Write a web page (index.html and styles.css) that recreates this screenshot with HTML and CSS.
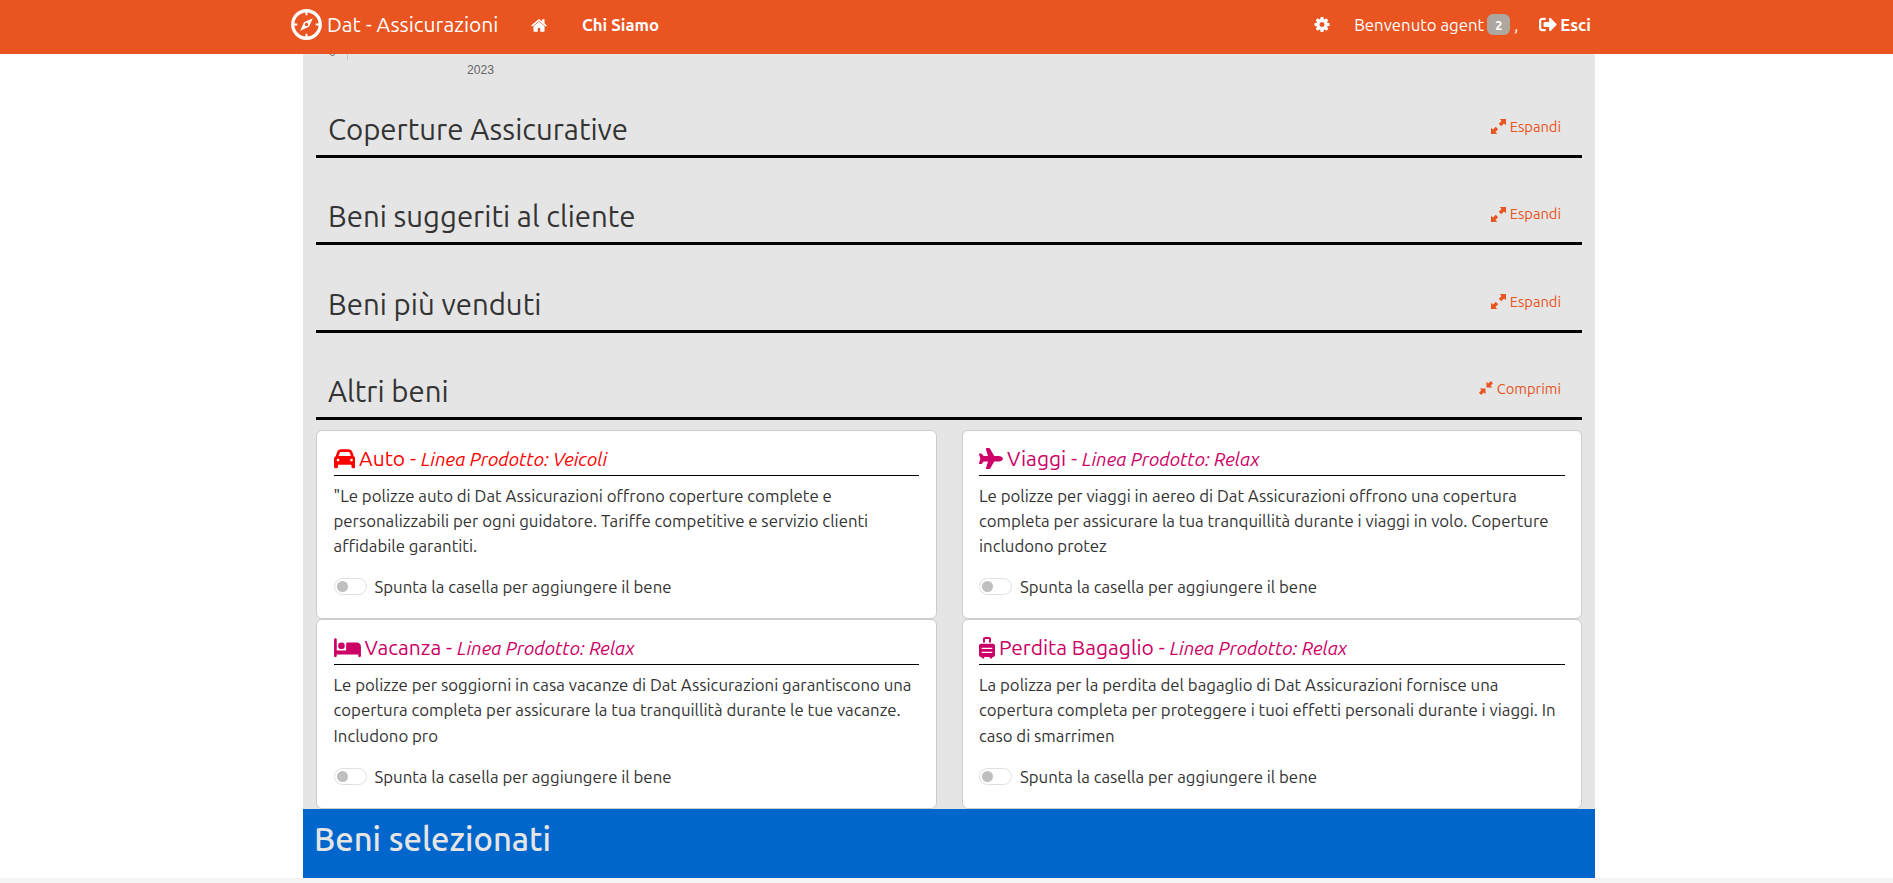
FILE: index.html
```html
<!DOCTYPE html>
<html lang="it">
<head>
<meta charset="utf-8">
<title>Dat - Assicurazioni</title>
<link rel="stylesheet" href="styles.css">
</head>
<body>
<svg class="defs" width="0" height="0" aria-hidden="true">
  <symbol id="expand" viewBox="0 0 15 15"><path d="M15 0V6.200L13 4.400 10.200 7.200 7.800 4.800 10.600 2 8.800 0zM0 15V8.800L2 10.600 4.800 7.800 7.200 10.200 4.400 13 6.200 15z"/></symbol>
  <symbol id="compress" viewBox="0 0 15 15"><path d="M8 7V.8L10 2.600 12.600 0 15 2.400 12.400 5 14.200 7zM7 8V14.200L5 12.400 2.400 15 0 12.600 2.600 10 .8 8z"/></symbol>
</svg>
<nav class="navbar">
  <a class="brand">
    <svg class="brand-logo" viewBox="0 0 32 32"><circle cx="16" cy="16" r="14.200" fill="none" stroke="#fff" stroke-width="3.400"/><path d="M16 2v4.500M16 25.500v4.500M2 16h4.500M25.500 16h4.500" stroke="#fff" stroke-width="2"/><path fill="#fff" fill-rule="evenodd" d="M22.500 9.500L18.600 18.200 9.500 22.500 13.400 13.800zM16 14.200a1.800 1.800 0 1 0 0 3.600 1.800 1.800 0 1 0 0-3.600z"/></svg>
    <span class="brand-name">Dat - Assicurazioni</span>
  </a>
  <a class="nav-home"><svg class="nav-icon" viewBox="64 128 1664 1536"><path d="M1472 992v480q0 26-19 45t-45 19h-384v-384h-256v384h-384q-26 0-45-19t-19-45v-480q0-1 .5-3t.5-3l575-474 575 474q1 2 1 6zm223-69l-62 74q-8 9-21 11h-3q-13 0-21-7l-692-577-692 577q-12 8-24 7-13-2-21-11l-62-74q-8-10-7-23.500t11-21.500l719-599q32-26 76-26t76 26l244 204v-195q0-14 9-23t23-9h192q14 0 23 9t9 23v408l219 182q10 8 11 21.500t-7 23.500z"/></svg></a>
  <a class="nav-link nav-about">Chi Siamo</a>
  <div class="nav-user">
    <svg class="nav-icon" viewBox="128 128 1536 1536"><path d="M1152 896q0-106-75-181t-181-75-181 75-75 181 75 181 181 75 181-75 75-181zm512-109v222q0 12-8 23t-20 13l-185 28q-19 54-39 91 35 50 107 138 10 12 10 25t-9 23q-27 37-99 108t-94 71q-12 0-26-9l-138-108q-44 23-91 38-16 136-29 186-7 28-36 28h-222q-14 0-24.500-8.500t-11.500-21.500l-28-184q-49-16-90-37l-141 107q-10 9-25 9-14 0-25-11-126-114-165-168-7-10-7-23 0-12 8-23 15-21 51-66.500t54-70.500q-27-50-41-99l-183-27q-13-2-21-12.500t-8-23.500v-222q0-12 8-23t19-13l186-28q14-46 39-92-40-57-107-138-10-12-10-24 0-10 9-23 26-36 98.500-107.500t94.500-71.500q13 0 26 10l138 107q44-23 91-38 16-136 29-186 7-28 36-28h222q14 0 24.500 8.500t11.500 21.500l28 184q49 16 90 37l142-107q9-9 24-9 13 0 25 10 129 119 165 170 7 8 7 22 0 12-8 23-15 21-51 66.500t-54 70.500q26 50 41 98l183 28q13 2 21 12.500t8 23.500z"/></svg>
    <span class="welcome">Benvenuto agent</span>
    <span class="badge">2</span>
    <span class="comma">,</span>
    <svg class="exit-icon" viewBox="0 48 512 416"><path d="M497 273L329 441c-15 15-41 4.500-41-17v-96H152c-13.300 0-24-10.700-24-24v-96c0-13.300 10.700-24 24-24h136V88c0-21.400 25.900-32 41-17l168 168c9.300 9.400 9.300 24.600 0 34zM192 436v-40c0-6.600-5.400-12-12-12H96c-17.700 0-32-14.300-32-32V160c0-17.700 14.300-32 32-32h84c6.600 0 12-5.400 12-12V76c0-6.600-5.400-12-12-12H96c-53 0-96 43-96 96v192c0 53 43 96 96 96h84c6.600 0 12-5.400 12-12z"/></svg>
    <a class="nav-link">Esci</a>
  </div>
</nav>
<main class="page">
  <svg class="chart" width="320" height="40" viewBox="0 0 320 40"><path d="M44.500 0V6" stroke="#c8c8c8"/><text x="29.500" y="2">0</text><text x="177.500" y="20">2023</text></svg>
  <div class="sections">
    <section class="section"><h2 class="section-title">Coperture Assicurative</h2><a class="toggle-link"><svg><use href="#expand"/></svg>Espandi</a></section>
    <section class="section"><h2 class="section-title">Beni suggeriti al cliente</h2><a class="toggle-link"><svg><use href="#expand"/></svg>Espandi</a></section>
    <section class="section"><h2 class="section-title">Beni più venduti</h2><a class="toggle-link"><svg><use href="#expand"/></svg>Espandi</a></section>
    <section class="section"><h2 class="section-title">Altri beni</h2><a class="toggle-link compress"><svg><use href="#compress"/></svg>Comprimi</a></section>
  </div>
  <div class="cards">
    <article class="card">
      <h3 class="card-title vehicles"><svg class="i-car" viewBox="0 0 512 512"><path d="M135.200 117.400L109.100 192H402.900l-26.100-74.600C372.300 104.600 360.200 96 346.600 96H165.400c-13.600 0-25.700 8.600-30.200 21.400zM39.600 196.800L74.800 96.300C88.300 57.800 124.600 32 165.400 32H346.600c40.800 0 77.100 25.800 90.600 64.300l35.200 100.500c23.200 9.600 39.600 32.500 39.600 59.200V448c0 17.700-14.300 32-32 32H448c-17.700 0-32-14.300-32-32V400H96v48c0 17.700-14.300 32-32 32H32c-17.700 0-32-14.300-32-32V256c0-26.700 16.400-49.600 39.600-59.200zM128 288a32 32 0 1 0-64 0 32 32 0 1 0 64 0zm288 32a32 32 0 1 0 0-64 32 32 0 1 0 0 64z"/></svg><span>Auto -</span><em>Linea Prodotto: Veicoli</em></h3>
      <p class="desc">"Le polizze auto di Dat Assicurazioni offrono coperture complete e<br>personalizzabili per ogni guidatore. Tariffe competitive e servizio clienti<br>affidabile garantiti.</p>
      <label class="check"><span class="switch"></span>Spunta la casella per aggiungere il bene</label>
    </article>
    <article class="card">
      <h3 class="card-title relax"><svg class="i-plane" viewBox="0 0 576 512"><path d="M480 192H365.710L260.610 8.060A16.014 16.014 0 0 0 246.710 0h-65.500c-10.630 0-18.300 10.170-15.380 20.390L214.860 192H112l-43.200-57.600c-3.020-4.030-7.770-6.400-12.800-6.400H16.010C5.600 128-2.040 137.780.490 147.880L32 256 .490 364.120C-2.040 374.220 5.600 384 16.010 384H56c5.040 0 9.780-2.370 12.800-6.400L112 320h102.860l-49.030 171.600c-2.920 10.220 4.750 20.400 15.380 20.400h65.500c5.740 0 11.040-3.080 13.890-8.060L365.710 320H480c35.350 0 96-28.650 96-64s-60.650-64-96-64z"/></svg><span>Viaggi -</span><em>Linea Prodotto: Relax</em></h3>
      <p class="desc">Le polizze per viaggi in aereo di Dat Assicurazioni offrono una copertura<br>completa per assicurare la tua tranquillità durante i viaggi in volo. Coperture<br>includono protez</p>
      <label class="check"><span class="switch"></span>Spunta la casella per aggiungere il bene</label>
    </article>
    <article class="card">
      <h3 class="card-title relax"><svg class="i-bed" viewBox="0 0 640 512"><path d="M32 32c17.700 0 32 14.300 32 32V320H288V160c0-17.700 14.300-32 32-32H544c53 0 96 43 96 96V448c0 17.700-14.300 32-32 32s-32-14.300-32-32V416H64v32c0 17.700-14.300 32-32 32s-32-14.300-32-32V64C0 46.300 14.300 32 32 32zm144 96a80 80 0 1 1 0 160 80 80 0 1 1 0-160z"/></svg><span>Vacanza -</span><em>Linea Prodotto: Relax</em></h3>
      <p class="desc">Le polizze per soggiorni in casa vacanze di Dat Assicurazioni garantiscono una<br>copertura completa per assicurare la tua tranquillità durante le tue vacanze.<br>Includono pro</p>
      <label class="check"><span class="switch"></span>Spunta la casella per aggiungere il bene</label>
    </article>
    <article class="card">
      <h3 class="card-title relax"><svg class="i-bag" viewBox="0 0 384 512"><path d="M336 160H48c-26.500 0-48 21.500-48 48v224c0 26.500 21.500 48 48 48h16v16c0 8.800 7.200 16 16 16h32c8.800 0 16-7.200 16-16v-16h128v16c0 8.800 7.200 16 16 16h32c8.800 0 16-7.200 16-16v-16h16c26.500 0 48-21.500 48-48V208c0-26.500-21.500-48-48-48zm-16 216c0 4.400-3.600 8-8 8H72c-4.400 0-8-3.600-8-8v-16c0-4.400 3.600-8 8-8h240c4.400 0 8 3.600 8 8v16zm0-96c0 4.400-3.600 8-8 8H72c-4.400 0-8-3.600-8-8v-16c0-4.400 3.600-8 8-8h240c4.400 0 8 3.600 8 8v16zM144 48h96v80h48V48c0-26.500-21.500-48-48-48h-96c-26.500 0-48 21.500-48 48v80h48V48z"/></svg><span>Perdita Bagaglio -</span><em>Linea Prodotto: Relax</em></h3>
      <p class="desc">La polizza per la perdita del bagaglio di Dat Assicurazioni fornisce una<br>copertura completa per proteggere i tuoi effetti personali durante i viaggi. In<br>caso di smarrimen</p>
      <label class="check"><span class="switch"></span>Spunta la casella per aggiungere il bene</label>
    </article>
  </div>
  <footer class="selected"><h2 class="selected-title">Beni selezionati</h2></footer>
</main>
</body>
</html>
```
FILE: styles.css
```css
* { box-sizing: border-box; }
body {
  margin: 0;
  height: 883px;
  overflow: hidden;
  display: flex;
  flex-direction: column;
  background: linear-gradient(#fff 878px, #f5f5f5 878px);
  color: #333;
  font: 16.8px/25.2px Ubuntu, "Open Sans", sans-serif;
  white-space: nowrap;
}
h2, h3, p { margin: 0; font-weight: 400; }
svg { display: block; flex: none; }
.defs { position: absolute; }

.navbar {
  flex: none;
  height: 54px;
  padding: 0 302px 4px 291px;
  display: flex;
  align-items: center;
  background: #e95420;
  color: #fff;
  fill: #fff;
}
.brand { display: flex; align-items: center; }
.brand-logo { width: 31px; height: 31px; margin-bottom: 1px; }
.brand-name { width: 171px; margin-left: 5px; font-size: 21px; }
.nav-home { margin-left: 33px; }
.nav-icon { width: 16px; height: 15px; }
.nav-link { font-weight: 700; }
.nav-about { margin-left: 35px; }
.nav-user { margin-left: auto; display: flex; align-items: center; }
.welcome { width: 129px; margin-left: 24px; }
.badge {
  width: 23px;
  height: 21px;
  margin-left: 4px;
  border-radius: 6px;
  background: #aea79f;
  font-size: 12.6px;
  font-weight: 700;
  line-height: 23px;
  text-align: center;
}
.comma { width: 28.5px; padding-left: 4px; }
.exit-icon { width: 18px; height: 15px; margin-right: 3.5px; }

.page {
  width: 1292px;
  height: 824px;
  margin-left: 303px;
  display: flex;
  flex-direction: column;
  background: #e5e5e5;
}
.chart {
  fill: #666;
  text-anchor: middle;
  font: 12.2px "Liberation Sans", Arial, sans-serif;
}
.sections { display: flex; flex-direction: column; gap: 23.33px; padding: 0 13px; }
.section {
  height: 64px;
  display: flex;
  justify-content: space-between;
  align-items: flex-start;
  padding: 16.9px 21px 0 12px;
  border-bottom: 3px solid #000;
}
.section-title { font-size: 29.4px; line-height: 38px; }
.toggle-link {
  display: flex;
  align-items: flex-start;
  gap: 3.5px;
  padding-top: 6px;
  color: #e95420;
  fill: #e95420;
  font-size: 14.7px;
  line-height: 20px;
}
.toggle-link svg { width: 15px; height: 15px; margin-top: 2.6px; }
.toggle-link.compress { gap: 4px; }
.toggle-link.compress svg { width: 14px; height: 14px; }

.cards {
  display: grid;
  grid-template-columns: 620.5px 620.5px;
  grid-auto-rows: 189.5px;
  column-gap: 25px;
  padding: 10px 12px 0 13px;
}
.card {
  padding: 16px 16.5px;
  background: #fff;
  border: 1px solid #ccc;
  border-radius: 6px;
}
.card-title {
  height: 28.8px;
  display: flex;
  align-items: baseline;
  border-bottom: 1px solid #000;
  font-size: 21px;
  line-height: 23.6px;
}
.card-title svg { height: 21.5px; align-self: flex-start; margin: 1px 4px 0 0; }
.card-title em { font-size: 18.9px; line-height: 22px; margin-left: 5px; }
.i-car { width: 21.5px; }
.i-plane { width: 24px; }
.i-bed { width: 27px; }
.i-bag { width: 16px; }
.vehicles { color: #f00; fill: #f00; }
.relax { color: #c06; fill: #c06; }
.desc { margin-top: 7px; }
.check { display: flex; align-items: center; gap: 8px; margin-top: 15.8px; }
.switch {
  width: 33px;
  height: 17px;
  padding: 2px;
  border: 1px solid #dee0e2;
  border-radius: 9px;
}
.switch::before {
  content: "";
  display: block;
  width: 11px;
  height: 11px;
  border-radius: 50%;
  background: #bfbfbf;
}

.selected { flex: 1; padding: 8.7px 11px; background: #06c; }
.selected-title {
  color: #e5e5e5;
  font-size: 32.8px;
  font-weight: 500;
  line-height: 42px;
}
```
